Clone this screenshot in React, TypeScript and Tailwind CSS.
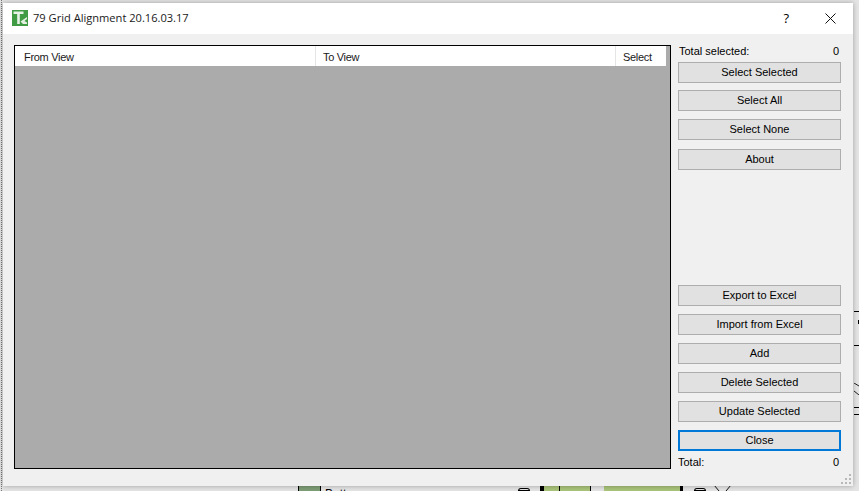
import React from 'react';

const topButtons = [
  { label: 'Select Selected', gap: 'mt-0' },
  { label: 'Select All', gap: 'mt-[7px]' },
  { label: 'Select None', gap: 'mt-[8px]' },
  { label: 'About', gap: 'mt-[9px]' },
];
const bottomButtons = ['Export to Excel', 'Import from Excel', 'Add', 'Delete Selected', 'Update Selected'];

const DialogButton = ({ label, focused, className = '' }: { label: string; focused?: boolean; className?: string }) => (
  <button
    className={`h-[21px] w-full bg-[#e1e1e1] text-[11px] leading-none text-black ${
      focused ? 'border-2 border-[#0078d7]' : 'border border-[#adadad]'
    } ${className}`}
  >
    {label}
  </button>
);

const TitleIcon = () => (
  <svg width="16" height="16" viewBox="0 0 16 16" className="-mt-px">
    <rect width="16" height="16" fill="#3f9c45" />
    <path d="M1.5 1.5h10v2.4H7.8V14H5.2V3.9H1.5z" fill="#e8f3e8" />
    <path d="M8.5 11.5L15 7V9L12.5 11L15 12.5V14H11z" fill="#e3efe0" />
  </svg>
);

const Backdrop = () => (
  <>
    <div className="absolute left-0 top-0 h-full w-[2px] border-r border-dotted border-[#777]" />
    {/* drawing that shows under the dialog */}
    <div className="absolute left-[298px] top-[486px] h-[5px] w-[23px] border-x border-black bg-[#7e9c76]" />
    <span className="absolute left-[325px] top-[488px] text-[12px] leading-none text-black">Bott</span>
    <div className="absolute left-[518px] top-[488px] h-[3px] w-[12px] rounded-t-sm border border-black" />
    <div className="absolute left-[540px] top-[486px] h-[5px] w-[4px] bg-black" />
    <div className="absolute left-[544px] top-[486px] h-[5px] w-[46px] bg-[#a9c47a]" />
    <div className="absolute left-[559px] top-[486px] h-[5px] w-px bg-black" />
    <div className="absolute left-[590px] top-[486px] h-[5px] w-px bg-black" />
    <div className="absolute left-[604px] top-[486px] h-[5px] w-[76px] bg-[#a9c47a]" />
    <div className="absolute left-[680px] top-[486px] h-[5px] w-[3px] bg-black" />
    <div className="absolute left-[694px] top-[488px] h-[3px] w-[12px] rounded-t-sm border border-black" />
    <svg width="20" height="6" viewBox="0 0 20 6" className="absolute left-[714px] top-[485px]">
      <path d="M0 0L5 6M17 0L12 6" stroke="#111" fill="none" />
    </svg>
    {/* right edge */}
    <div className="absolute left-[854px] top-[311px] h-px w-[5px] bg-black" />
    <div className="absolute left-[858px] top-[320px] h-[4px] w-px bg-black" />
    <div className="absolute left-[854px] top-[345px] h-px w-[5px] bg-black" />
    <div className="absolute left-[854px] top-[407px] h-px w-[5px] bg-black" />
    <div className="absolute left-[854px] top-[414px] h-px w-[5px] bg-black" />
    <svg width="6" height="12" viewBox="0 0 6 12" className="absolute left-[853px] top-[383px]">
      <path d="M1 0L6 3M1 8L6 12" stroke="#222" fill="none" />
    </svg>
  </>
);

export default function App() {
  return (
    <div className="relative h-[491px] w-[859px] overflow-hidden bg-[#e4e4e4] font-['Liberation_Sans',sans-serif]">
      <Backdrop />

      <div className="absolute left-[3px] top-[3px] flex h-[483px] w-[850px] flex-col bg-[#f0f0f0] shadow-[0_0_5px_rgba(0,0,0,0.3)]">
        <div className="flex h-[31px] shrink-0 items-center bg-white pl-[9px]">
          <TitleIcon />
          <span className="ml-[5px] font-['Open_Sans',sans-serif] text-[11.1px] text-[#1a1a1a]">79 Grid Alignment 20.16.03.17</span>
          <span className="ml-auto mr-[36px] font-['Open_Sans',sans-serif] text-[13px] text-black">?</span>
          <svg width="11" height="11" viewBox="0 0 11 11" className="mr-[17px]">
            <path d="M0.5 0.5L10.5 10.5M10.5 0.5L0.5 10.5" stroke="#111" strokeWidth="1" fill="none" />
          </svg>
        </div>

        <div className="flex flex-1 pl-[11px] pt-[11px]">
          <div className="h-[424px] w-[657px] border border-black bg-[#ababab]">
            <div className="flex h-[20px] w-[651px] bg-white text-[11px] leading-[22px] tracking-[-0.3px] text-[#1a1a1a]">
              <div className="w-[301px] border-r border-[#e5e5e5] pl-[9px]">From View</div>
              <div className="w-[300px] border-r border-[#e5e5e5] pl-[7px]">To View</div>
              <div className="w-[50px] pl-[7px]">Select</div>
            </div>
          </div>

          <div className="ml-[7px] flex h-[426px] w-[163px] flex-col">
            <div className="flex h-[17px] justify-between pl-[1px] pr-[2px] text-[11px] leading-[13px] text-black">
              <span>Total selected:</span>
              <span>0</span>
            </div>
            <div className="flex flex-col">
              {topButtons.map((b) => (
                <DialogButton key={b.label} label={b.label} className={b.gap} />
              ))}
            </div>
            <div className="mt-auto flex flex-col gap-[8px]">
              {bottomButtons.map((label) => (
                <DialogButton key={label} label={label} />
              ))}
              <DialogButton label="Close" focused />
            </div>
            <div className="flex h-[20px] justify-between pr-[2px] pt-[4px] text-[11px] leading-[14px] text-black">
              <span>Total:</span>
              <span>0</span>
            </div>
          </div>
        </div>

        <svg width="11" height="11" viewBox="0 0 11 11" className="absolute bottom-[1px] right-[1px]">
          <g fill="#b8b8b8">
            <rect x="8" y="0" width="2" height="2" />
            <rect x="4" y="4" width="2" height="2" />
            <rect x="8" y="4" width="2" height="2" />
            <rect x="0" y="8" width="2" height="2" />
            <rect x="4" y="8" width="2" height="2" />
            <rect x="8" y="8" width="2" height="2" />
          </g>
        </svg>
      </div>
    </div>
  );
}
